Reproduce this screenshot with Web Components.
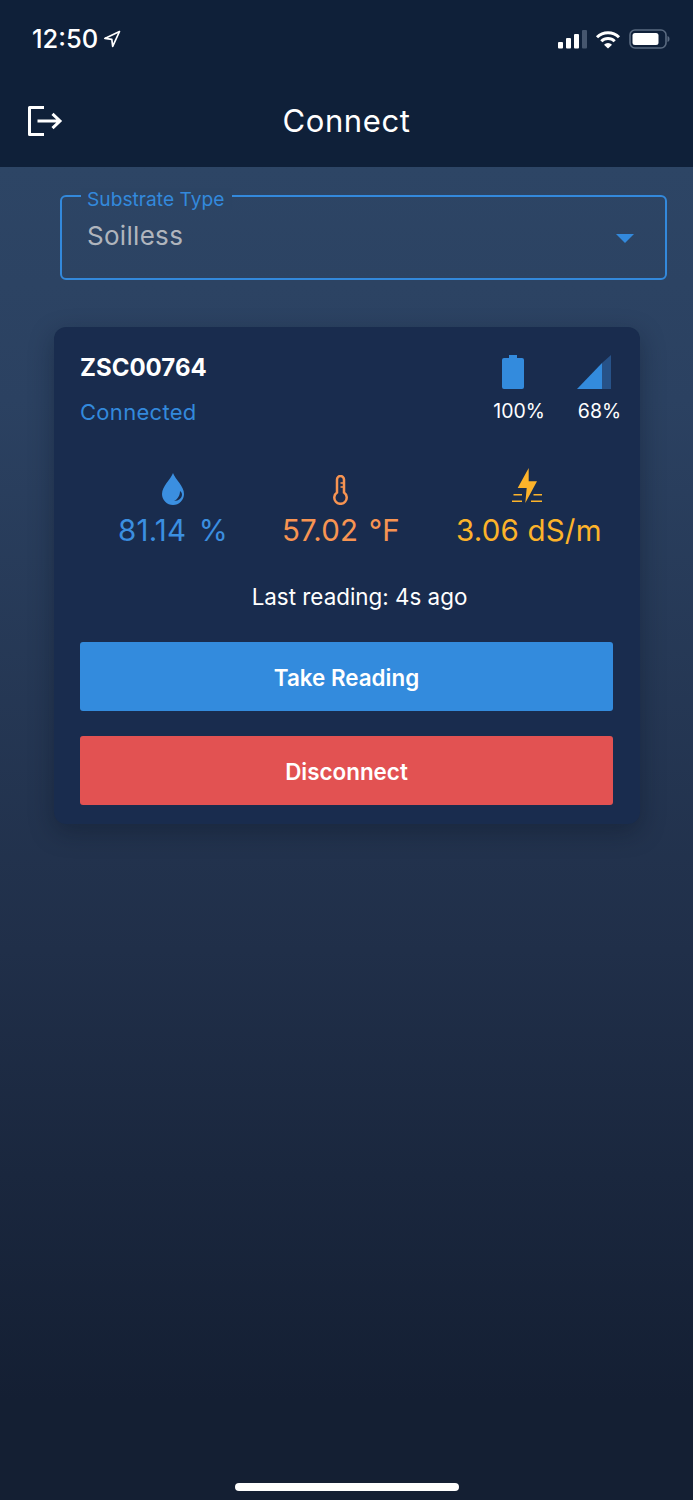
<!DOCTYPE html>
<html>
<head>
<meta charset="utf-8">
<title>Connect</title>
<style>
  html, body { margin: 0; padding: 0; }
  body { font-family: Inter, "Liberation Sans", sans-serif; background: #141f33; }
</style>
</head>
<body>
<connect-screen></connect-screen>

<script>
// status bar + title
class AppHeader extends HTMLElement {
  constructor() {
    super();
    this.attachShadow({ mode: "open" });
    this.shadowRoot.innerHTML = `
    <style>
      :host { display: block; height: 167px; background: #0f2039; color: #fff; box-sizing: border-box; }
      .status { display: flex; align-items: center; justify-content: space-between; height: 24px; padding: 26px 23px 0 32px; }
      .time { display: flex; align-items: center; gap: 5px; font-size: 25.5px; font-weight: 500; line-height: 24px; padding-top: 1px; }
      .icons { display: flex; align-items: center; gap: 8px; padding-top: 2px; }
      .icons svg, .time svg { display: block; }
      .bar { display: grid; grid-template-columns: 60px 1fr 60px; align-items: center; height: 48px; margin-top: 47px; padding: 0 0 0 27px; }
      h1 { margin: 0; font-size: 31px; font-weight: 400; text-align: center; letter-spacing: 0.6px; grid-column: 2; line-height: 48px; padding-right: 27px; }
      .bar svg { grid-column: 1; grid-row: 1; display: block; }
    </style>
    <div class="status">
      <div class="time">12:50
        <svg width="18" height="18" viewBox="0 0 18 18" fill="none" stroke="#fff" stroke-width="1.7" stroke-linejoin="round"><path d="M16.5 1.5 1.8 8.400l7 .9.9 7z"/></svg>
      </div>
      <div class="icons">
        <svg width="29" height="19" viewBox="0 0 29 19"><rect x="0" y="12" width="5" height="6.500" rx="1" fill="#fff"/><rect x="8" y="8" width="5" height="10.500" rx="1" fill="#fff"/><rect x="16" y="4" width="5" height="14.500" rx="1" fill="#fff"/><rect x="24" y="0" width="5" height="18.500" rx="1" fill="#46566e"/></svg>
        <svg width="26" height="19" viewBox="0 0 26 19" fill="none" stroke="#fff" stroke-width="3"><path d="M2 7.200a15.600 15.600 0 0 1 22 0"/><path d="M6.300 11.300a9.600 9.600 0 0 1 13.400 0"/><path d="M13 18.600l-4-3.900a5.700 5.700 0 0 1 8 0z" fill="#fff" stroke="none"/></svg>
        <svg width="41" height="20" viewBox="0 0 41 20"><rect x="1" y="1" width="36" height="18" rx="5" fill="none" stroke="#5a6a80" stroke-width="1.600"/><rect x="3.500" y="4" width="26" height="12" rx="2.500" fill="#fff"/><path d="M38.500 7c1.300.4 2 1.500 2 3s-.7 2.600-2 3z" fill="#5a6a80"/></svg>
      </div>
    </div>
    <div class="bar">
      <svg width="36" height="32" viewBox="0 0 36 32" fill="none" stroke="#fff" stroke-width="3"><path d="M17 2.500H2.500v27H17" stroke-linejoin="round"/><path d="M10.500 16h22.500M25.500 8.800l7.500 7.200-7.500 7.200"/></svg>
      <h1>Connect</h1>
    </div>`;
  }
}
customElements.define("app-header", AppHeader);

// outlined select with floating label
class SubstrateSelect extends HTMLElement {
  constructor() {
    super();
    this.attachShadow({ mode: "open" });
    this.shadowRoot.innerHTML = `
    <style>
      :host { display: block; box-sizing: border-box; height: 85px; margin-left: 60px; width: 607px; position: relative;
        border: 2px solid #3389dc; border-radius: 6px; }
      .label { position: absolute; left: 19px; top: -9px; padding: 0 8px 0 6px; font-size: 19.2px; line-height: 22px; color: #3389dc; background: #2c4464; }
      .value { padding: 21px 0 0 25px; font-size: 26px; line-height: 36px; color: #b0b5bd; letter-spacing: 0.3px; }
      .arrow { position: absolute; right: 31px; top: 37px; width: 0; height: 0; border-left: 9px solid transparent; border-right: 9px solid transparent; border-top: 9px solid #3389dc; }
    </style>
    <span class="label"><slot name="label"></slot></span>
    <div class="value"><slot></slot></div>
    <span class="arrow"></span>`;
  }
}
customElements.define("substrate-select", SubstrateSelect);

// one icon + value column of the reading row
class ReadingStat extends HTMLElement {
  constructor() {
    super();
    this.attachShadow({ mode: "open" });
    this.shadowRoot.innerHTML = `
    <style>
      :host { display: flex; flex-direction: column; align-items: center; color: var(--tone); }
      .icon { height: 42px; display: flex; align-items: flex-end; }
      .val { font-size: 29.5px; line-height: 36px; letter-spacing: 0.2px; word-spacing: var(--space, 0); white-space: nowrap; margin-top: 7px; }
    </style>
    <div class="icon"><slot name="icon"></slot></div>
    <div class="val"><slot></slot></div>`;
  }
}
customElements.define("reading-stat", ReadingStat);

class ActionButton extends HTMLElement {
  constructor() {
    super();
    this.attachShadow({ mode: "open" });
    this.shadowRoot.innerHTML = `
    <style>
      :host { display: flex; align-items: center; justify-content: center; box-sizing: border-box; height: 69px; padding-top: 1px; border-radius: 3px;
        color: #fff; font-size: 22.4px; font-weight: 600; background: var(--fill); }
    </style>
    <slot></slot>`;
  }
}
customElements.define("action-button", ActionButton);

class SensorCard extends HTMLElement {
  constructor() {
    super();
    this.attachShadow({ mode: "open" });
    this.shadowRoot.innerHTML = `
    <style>
      :host { display: block; box-sizing: border-box; width: 586px; height: 497px; margin: 47px 0 0 54px; padding: 24px 27px 0 26px;
        background: #192c4e; border-radius: 12px; color: #fff; box-shadow: 0 8px 24px rgba(10, 18, 32, 0.35); }
      .top { display: flex; justify-content: space-between; height: 100px; }
      .name { font-size: 24px; font-weight: 700; line-height: 34px; }
      .state { font-size: 22px; line-height: 32px; color: #3389dc; margin-top: 11px; letter-spacing: 0.3px; }
      .meters { display: flex; gap: 32px; margin-right: -9px; margin-top: 4px; }
      .meter { display: flex; flex-direction: column; align-items: center; font-size: 19.5px; line-height: 26px; }
      .meter svg { display: block; margin: 0 11px 9px 0; }
      .meter svg.cell { margin-right: 13px; }
      .readings { display: flex; gap: 54px; padding-left: 38px; margin-top: 12px; }
      .last { text-align: center; font-size: 22.4px; line-height: 30px; margin: 34px 0 0 26px; }
      .buttons { display: flex; flex-direction: column; gap: 25px; margin-top: 30px; }
      action-button.take { --fill: #338bdd; }
      action-button.drop { --fill: #e25252; }
      reading-stat.water { --tone: #3b8fe0; --space: 4px; }
      reading-stat.temp { --tone: #f79452; --space: 2px; }
      reading-stat.ec { --tone: #fdb32a; margin-left: 2px; }
    </style>
    <div class="top">
      <div>
        <div class="name">ZSC00764</div>
        <div class="state">Connected</div>
      </div>
      <div class="meters">
        <div class="meter">
          <svg class="cell" width="22" height="34" viewBox="0 0 22 34"><path d="M7 0h8v3h5a2 2 0 0 1 2 2v27a2 2 0 0 1-2 2H2a2 2 0 0 1-2-2V5a2 2 0 0 1 2-2h5z" fill="#338bdd"/></svg>
          100%
        </div>
        <div class="meter">
          <svg width="34" height="34" viewBox="0 0 34 34"><path d="M34 0v34H25V8z" fill="#275288"/><path d="M25 8v26H0z" fill="#338bdd"/></svg>
          68%
        </div>
      </div>
    </div>
    <div class="readings">
      <reading-stat class="water">
        <svg slot="icon" width="22" height="32" viewBox="0 0 22 32"><path fill-rule="evenodd" fill="#3b8fe0" d="M11 0c2 6 11 13 11 21a11 11 0 0 1-22 0C0 13 9 6 11 0zm7 18c0 4-2 8-6 10 5 0 8-3 8-6.500 0-1.500-.8-2.700-2-3.500z"/></svg>
        81.14 %
      </reading-stat>
      <reading-stat class="temp">
        <svg slot="icon" width="15" height="30" viewBox="0 0 15 30" fill="none" stroke="#f79452" stroke-width="2.500"><path d="M4 17.500V4.500a3.500 3.500 0 0 1 7 0v13a6.200 6.200 0 1 1-7 0z"/><path d="M7.500 8H11M7.500 12H11" stroke-width="1.500"/></svg>
        57.02 °F
      </reading-stat>
      <reading-stat class="ec">
        <svg slot="icon" width="30" height="35" viewBox="0 0 30 35" fill="#fdb32a" style="margin:0 4px 2px 0"><path d="M16.700 0 5.700 20h9l-1.400 15L25 13.300h-8.300z"/><path d="M1.500 26h8.500v1.500H1.500zM0 32.500h10V34H0zM21.500 26H30v1.500h-8.500zM19 32.500h11V34H19z"/></svg>
        3.06 dS/m
      </reading-stat>
    </div>
    <div class="last">Last reading: 4s ago</div>
    <div class="buttons">
      <action-button class="take">Take Reading</action-button>
      <action-button class="drop">Disconnect</action-button>
    </div>`;
  }
}
customElements.define("sensor-card", SensorCard);

class ConnectScreen extends HTMLElement {
  constructor() {
    super();
    this.attachShadow({ mode: "open" });
    this.shadowRoot.innerHTML = `
    <style>
      :host { display: block; height: 1500px; overflow: hidden; position: relative;
        background: linear-gradient(#2d4565 167px, #2b4161 400px, #202f49 950px, #141f33 1400px); }
      .body { padding-top: 28px; }
      .home { position: absolute; left: 235px; bottom: 9px; width: 224px; height: 8px; border-radius: 4px; background: #fff; }
    </style>
    <app-header></app-header>
    <div class="body">
      <substrate-select><span slot="label">Substrate Type</span>Soilless</substrate-select>
      <sensor-card></sensor-card>
    </div>
    <div class="home"></div>`;
  }
}
customElements.define("connect-screen", ConnectScreen);
</script>
</body>
</html>
